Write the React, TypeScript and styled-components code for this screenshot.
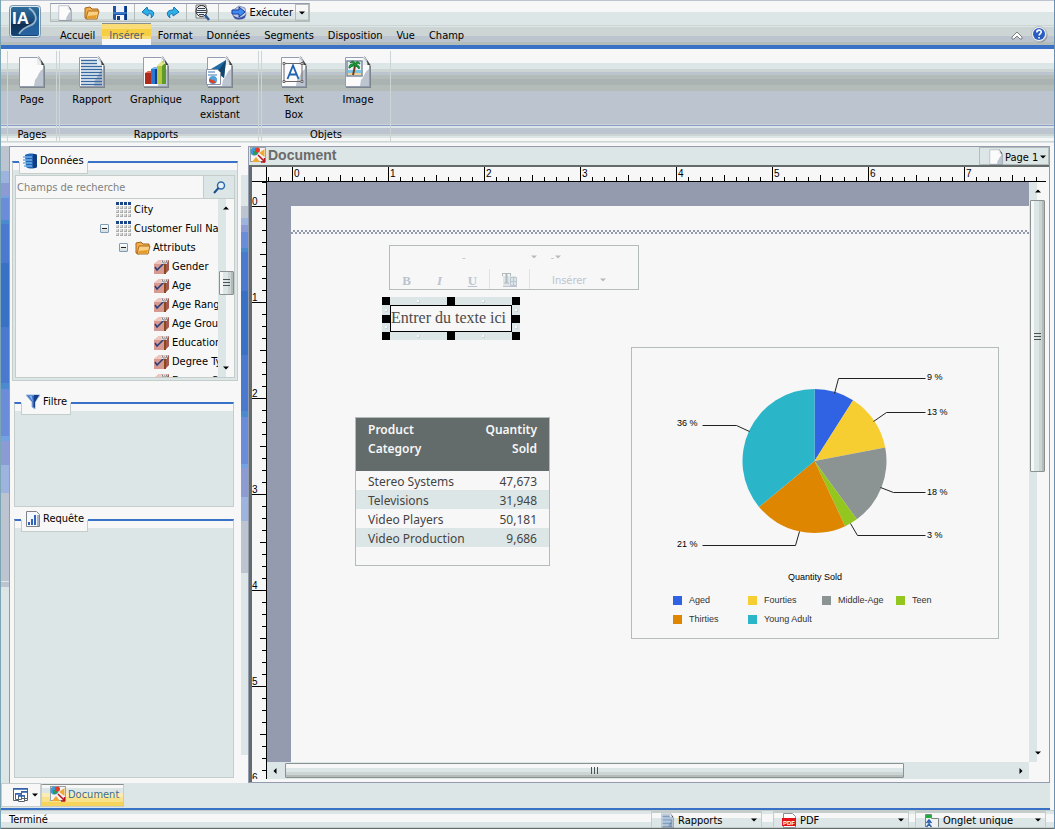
import React from "react";
import styled, { createGlobalStyle, css } from "styled-components";

const c = {
  white: "#f7f7f7",
  pale: "#dde6e6",
  mist: "#ccd5d3",
  steel: "#bcc4cf",
  sage: "#b4bcb9",
  edge: "#c4cdc9",
  frame: "#949bae",
  blue: "#3971c6",
  slate: "#636c6b",
};

const ui = `"DejaVu Sans Condensed", "Noto Sans", sans-serif`;

const Global = createGlobalStyle`
  * { box-sizing: border-box; }
  body { margin: 0; background: ${c.white}; }
  button, input, select { font: inherit; color: inherit; margin: 0; }
  button { border: 0; padding: 0; background: none; }
  svg { flex: none; }
`;

/* ---------- shell ---------- */

const Shell = styled.div`
  display: flex;
  flex-direction: column;
  min-height: 100vh;
  background: ${c.white};
  border-left: 1px solid #7ba5b5;
  border-right: 1px solid #6b8fae;
  color: #000;
  font: 11px/15px ${ui};
`;

const Header = styled.header`
  display: flex;
  height: 49px;
  border-top: 1px solid ${c.steel};
  border-bottom: 4px solid ${c.blue};
  background: linear-gradient(
    ${c.white} 0 11px, ${c.pale} 11px 24px, ${c.mist} 24px 25px, ${c.pale} 25px 26px,
    ${c.mist} 26px 35px, ${c.steel} 35px 41px, ${c.sage} 41px
  );
`;

const LogoButton = styled.button`
  width: 34px;
  height: 36px;
  margin: 3px 8px 0 7px;
`;

const HeaderRows = styled.div`
  flex: 1;
  min-width: 0;
`;

const QuickBar = styled.div`
  display: flex;
  align-items: center;
  width: 260px;
  height: 19px;
  margin-top: 2px;
  border: 1px solid ${c.sage};
  border-top-color: ${c.frame};
  background: linear-gradient(${c.white} 0 8px, ${c.pale} 8px 15px, ${c.mist} 15px);
`;

const QuickGroup = styled.div<{ $w: number }>`
  display: flex;
  align-items: center;
  justify-content: space-around;
  width: ${(p) => p.$w}px;
  height: 17px;
  border-right: 1px solid ${c.sage};
`;

const IconButton = styled.button`
  display: flex;
  align-items: center;
  justify-content: center;
  width: 18px;
  height: 17px;
`;

const RunButton = styled.button`
  display: flex;
  flex: 1;
  align-items: center;
  justify-content: flex-end;
  gap: 2px;
  height: 17px;
  padding-right: 2px;
`;

const RunMenu = styled.button`
  display: flex;
  align-items: center;
  justify-content: center;
  width: 14px;
  height: 17px;
  border: 1px solid ${c.sage};
`;

const MenuRow = styled.nav`
  display: flex;
  height: 22px;
  margin-top: 1px;
  padding-left: 3px;
`;

const MenuTab = styled.button<{ $on?: boolean }>`
  height: 22px;
  padding: 3px 7px 0;
  white-space: nowrap;
  ${(p) =>
    p.$on &&
    css`
      border-top: 1px solid #8a8f8c;
      padding-top: 1px;
      color: #4a5f78;
      background: linear-gradient(#f8dc78 0 5px, #f6ce42 5px 12px, #f8dc78 12px 15px, ${c.white} 15px);
    `}
`;

const HeaderTools = styled.div`
  display: flex;
  align-self: flex-end;
  align-items: center;
  gap: 4px;
  height: 21px;
  padding-right: 6px;
`;

/* ---------- ribbon ---------- */

const Ribbon = styled.section`
  display: flex;
  height: 97px;
  padding: 2px 0 4px 6px;
  background: linear-gradient(
    ${c.white} 0 14px, ${c.pale} 14px 20px, ${c.mist} 20px 23px, ${c.steel} 23px 26px,
    ${c.sage} 26px 30px, #abb3b2 30px 36px, ${c.sage} 36px 42px, ${c.steel} 42px 75px,
    ${c.mist} 75px 76px, #8b9bcf 76px 77px, ${c.pale} 77px 79px, ${c.steel} 79px 85px,
    ${c.mist} 85px 87px, ${c.pale} 87px 89px, ${c.white} 89px 92px, ${c.mist} 92px 93px,
    ${c.pale} 93px 94px, ${c.white} 94px
  );
`;

const RibbonGroup = styled.div<{ $end?: number }>`
  display: flex;
  flex-direction: column;
  padding-right: ${(p) => p.$end || 0}px;
  margin-right: 2px;
  border-left: 1px solid ${c.mist};
  border-right: 1px solid ${c.mist};
`;

const RibbonItems = styled.div`
  display: flex;
  height: 76px;
`;

const RibbonItem = styled.button<{ $narrow?: boolean }>`
  display: flex;
  flex-direction: column;
  align-items: center;
  gap: 4px;
  width: ${(p) => (p.$narrow ? 48 : 64)}px;
  padding: 5px 0 0;
  white-space: pre-line;
`;

const RibbonLabel = styled.div`
  text-align: center;
  line-height: 15px;
`;

/* ---------- work area ---------- */

const Work = styled.main`
  display: flex;
  flex: 1;
  min-height: 600px;
`;

const LeftEdge = styled.div`
  width: 8px;
  background: linear-gradient(
    ${c.steel} 0 25px, #9cb4de 25px 37px, #8c9bd3 37px 50px, #73a2e3 50px 52px, #6a8cd9 52px 74px,
    #4a8bd0 74px 78px, #4a79d0 78px 117px, ${c.blue} 117px 181px, #4a79d0 181px 237px,
    #4a8bd0 237px 243px, #6a8cd9 243px 290px, #73a2e3 290px 295px, #8c9bd3 295px 319px,
    #9cb4de 319px 347px, ${c.steel} 347px 435px, ${c.pale} 435px 436px, ${c.steel} 436px 441px, ${c.pale} 441px
  );
`;

const Splitter = styled.div`
  width: 7px;
  margin: 29px 0 28px;
  background: linear-gradient(
    ${c.pale} 0 31px, ${c.steel} 31px 43px, #9cb4de 43px 50px, #8c9bd3 50px 57px, #6a8cd9 57px 73px,
    #4a8bd0 73px 77px, #4a79d0 77px 116px, ${c.blue} 116px 180px, #4a79d0 180px 236px,
    #4a8bd0 236px 242px, #6a8cd9 242px 289px, #73a2e3 289px 293px, #8c9bd3 293px 322px,
    #9cb4de 322px 346px, ${c.steel} 346px 398px, ${c.pale} 398px
  );
`;

const SidePanel = styled.aside`
  display: flex;
  flex-direction: column;
  width: 232px;
  padding: 14px 3px 5px 2px;
  border-top: 1px solid ${c.frame};
  border-left: 1px solid ${c.frame};
`;

const Group = styled.section<{ $h?: number; $inset?: boolean; $gap?: number }>`
  display: flex;
  flex-direction: column;
  ${(p) => (p.$h ? `height: ${p.$h}px;` : "flex: 1;")}
  margin: ${(p) => p.$gap || 0}px ${(p) => (p.$inset ? "4px 0 2px" : "0 0 0")};
  padding: 0 2px 2px;
  border: 1px solid ${c.edge};
  border-top: 2px solid ${c.blue};
  background: linear-gradient(${c.white} 0 7px, ${c.pale} 7px);
`;

const GroupTitle = styled.h2`
  display: flex;
  align-items: center;
  gap: 2px;
  align-self: flex-start;
  height: 24px;
  margin: -13px 0 0 4px;
  padding: 0 4px 3px 4px;
  font: inherit;
  background:
    linear-gradient(${c.edge}, ${c.edge}) 0 100% / 1px 12px no-repeat,
    linear-gradient(${c.edge}, ${c.edge}) 100% 100% / 1px 12px no-repeat,
    linear-gradient(${c.edge}, ${c.edge}) 0 100% / 100% 1px no-repeat,
    ${c.white};
`;

const SearchRow = styled.form`
  display: flex;
  height: 24px;
  margin-top: 1px;
  border: 1px solid ${c.edge};
  background: ${c.white};
`;

const SearchInput = styled.input`
  flex: 1;
  min-width: 0;
  padding: 0 1px;
  border: 0;
  outline: 0;
  background: transparent;
  &::placeholder { color: #7d827f; opacity: 1; }
`;

const SearchButton = styled.button`
  display: flex;
  align-items: center;
  justify-content: center;
  width: 31px;
  border-left: 1px solid ${c.edge};
  background: ${c.pale};
`;

const TreeBox = styled.div`
  display: flex;
  flex: 1;
  min-height: 0;
  border: 1px solid ${c.edge};
  border-top: 0;
  background: ${c.white};
`;

const Tree = styled.ul`
  flex: 1;
  min-width: 0;
  margin: 0;
  padding: 1px 0 0;
  overflow: hidden;
  list-style: none;
`;

const Leaf = styled.li<{ $depth: number }>`
  display: flex;
  align-items: center;
  gap: 2px;
  height: 19px;
  padding-left: ${(p) => 62 + p.$depth * 19}px;
  white-space: nowrap;
`;

const Toggle = styled.button`
  flex: none;
  width: 9px;
  height: 9px;
  margin: 0 5px 0 3px;
  border: 1px solid #7f9bb5;
  border-radius: 1px;
  background: linear-gradient(#222, #222) center / 5px 1px no-repeat, linear-gradient(#fff, #d4dcdc);
`;

const NoToggle = styled.span`
  flex: none;
  width: 17px;
`;

const VBar = styled.div<{ $w: number }>`
  display: flex;
  flex: none;
  flex-direction: column;
  align-items: center;
  width: ${(p) => p.$w}px;
  background: linear-gradient(90deg, ${c.pale} 0 50%, ${c.white} 50%);
`;

const BarCorner = styled.div`
  width: 100%;
  height: 17px;
  background: ${c.white};
`;

const HBar = styled.div`
  display: flex;
  align-items: center;
  width: 100%;
  height: 17px;
  background: ${c.pale};
`;

const ArrowButton = styled.button`
  display: flex;
  flex: none;
  align-items: center;
  justify-content: center;
  width: 16px;
  height: 18px;
`;

const Thumb = styled.div<{ $dir: "v" | "h"; $size: number }>`
  display: flex;
  align-items: center;
  justify-content: center;
  border: 1px solid #8b9190;
  border-radius: 1px;
  ${(p) =>
    p.$dir === "v"
      ? css`
          width: 15px;
          height: ${p.$size}%;
          background: linear-gradient(90deg, ${c.white} 0 3px, ${c.pale} 3px 8px, ${c.mist} 8px 11px, ${c.sage} 11px);
        `
      : css`
          width: ${p.$size}%;
          height: 15px;
          background: linear-gradient(${c.white} 0 4px, ${c.pale} 4px 8px, ${c.mist} 8px 11px, ${c.sage} 11px);
        `}
`;

const Track = styled.div<{ $dir: "v" | "h"; $lead: number }>`
  display: flex;
  flex: 1;
  flex-direction: ${(p) => (p.$dir === "v" ? "column" : "row")};
  align-items: center;
  min-height: 0;
  ${(p) => (p.$dir === "v" ? `padding-top: ${p.$lead}px;` : `padding-left: ${p.$lead}px;`)}
`;

/* ---------- document ---------- */

const DocPanel = styled.section`
  display: flex;
  flex: 1;
  flex-direction: column;
  min-width: 0;
  margin-right: 4px;
  border: 1px solid ${c.frame};
`;

const DocBar = styled.div`
  display: flex;
  justify-content: space-between;
  height: 18px;
  background: ${c.pale};
`;

const DocTitle = styled.h1`
  display: flex;
  align-items: center;
  gap: 2px;
  margin: 0;
  padding: 0 0 2px 1px;
  color: #6b6b6b;
  font: bold 14px/16px "Liberation Sans", Arial, sans-serif;
`;

const PageButton = styled.button`
  display: flex;
  align-items: center;
  gap: 2px;
  width: 70px;
  padding: 2px 3px 0 9px;
  border: 1px solid ${c.sage};
  white-space: nowrap;
`;

const DocBody = styled.div`
  display: flex;
  flex: 1;
  flex-direction: column;
  min-height: 0;
  padding: 0 3px 3px 0;
  border-top: 2px solid ${c.slate};
  border-left: 3px solid ${c.slate};
`;

const RulerRow = styled.div`
  display: flex;
  height: 15px;
  overflow: hidden;
  border-bottom: 1px solid #000;
`;

const BodyRow = styled.div`
  display: flex;
  flex: 1;
  min-height: 0;
`;

const SideRuler = styled.div`
  position: relative;
  flex: none;
  width: 15px;
  overflow: hidden;
  border-right: 1px solid #000;
  svg { position: absolute; top: 0; left: 0; }
`;

const Corner = styled.div`
  flex: none;
  width: 15px;
  border-right: 1px solid #000;
`;

const CanvasColumn = styled.div`
  display: flex;
  flex: 1;
  flex-direction: column;
  min-width: 0;
`;

const Canvas = styled.div`
  display: flex;
  flex: 1;
  min-height: 0;
  padding: 24px 0 0 24px;
  overflow: hidden;
  background: ${c.frame};
`;

const Page = styled.div`
  position: relative;
  flex: 1;
  background: ${c.white};
`;

const HeaderMark = styled.div`
  height: 4px;
  margin-top: 24px;
  background: repeating-conic-gradient(${c.frame} 0 25%, ${c.white} 0 50%) 0 0 / 4px 4px;
`;

const TextTools = styled.div`
  position: absolute;
  left: 98px;
  top: 39px;
  display: grid;
  grid-template-rows: 22px 21px;
  width: 250px;
  border: 1px solid ${c.sage};
  color: ${c.steel};
`;

const ToolRow = styled.div`
  display: flex;
  align-items: center;
`;

const StyleButton = styled.button<{ $look: string }>`
  width: 33px;
  padding-top: 4px;
  text-align: center;
  font: bold 13px/15px "Liberation Serif", serif;
  ${(p) => p.$look}
`;

const ToolCell = styled.button`
  display: flex;
  align-items: center;
  justify-content: center;
  gap: 14px;
  height: 20px;
  padding: 3px 11px 0;
  border-left: 1px solid ${c.pale};
`;

const InsertCell = styled(ToolCell)`
  padding: 3px 22px 0;
`;

const PickRow = styled(ToolRow)`
  gap: 14px;
  padding-left: 72px;
`;

const Pick = styled.button<{ $gap: number }>`
  display: flex;
  align-items: center;
  gap: ${(p) => p.$gap}px;
`;

const Selection = styled.div`
  position: absolute;
  left: 91px;
  top: 91px;
  padding: 8px;
  background: ${c.pale};
`;

const TextBox = styled.div`
  width: 122px;
  height: 27px;
  border: 1px solid #000;
  background: ${c.white};
  color: #4a4a4a;
  white-space: nowrap;
  font: 16px/23px "Liberation Serif", "Times New Roman", serif;
`;

const Handle = styled.i<{ $x: string; $y: string; $dot?: boolean }>`
  position: absolute;
  left: ${(p) => p.$x};
  top: ${(p) => p.$y};
  width: ${(p) => (p.$dot ? 3 : 8)}px;
  height: ${(p) => (p.$dot ? 3 : 8)}px;
  background: ${(p) => (p.$dot ? c.white : "#000")};
  border: solid ${c.mist};
  border-width: ${(p) => (p.$dot ? "0 1px 1px 0" : "0")};
`;

const Report = styled.div`
  position: absolute;
  left: 64px;
  top: 211px;
  width: 195px;
  height: 149px;
  border: 1px solid ${c.sage};
`;

const Sales = styled.table`
  width: 100%;
  border-collapse: collapse;
  color: #444;
  font: 12px/19px "Noto Sans", sans-serif;
  th {
    height: 53px;
    padding: 2px 12px 0;
    vertical-align: top;
    color: ${c.white};
    background: ${c.slate};
    font-weight: 600;
    text-align: left;
  }
  td {
    height: 19px;
    padding: 2px 12px 0;
    line-height: 17px;
  }
  th:last-child, td:last-child {
    padding-left: 0;
    text-align: right;
  }
  td:first-child { white-space: nowrap; }
  tbody tr:nth-child(even) { background: ${c.pale}; }
`;

const Chart = styled.figure`
  position: absolute;
  left: 340px;
  top: 141px;
  width: 368px;
  height: 292px;
  margin: 0;
  border: 1px solid ${c.sage};
  color: #333;
  font: 9px/13px "Liberation Sans", Arial, sans-serif;
  svg { display: block; }
`;

const ChartTitle = styled.figcaption`
  color: #000;
  text-align: center;
`;

const Legend = styled.ul`
  display: grid;
  grid-template-columns: 75px 74px 74px 74px;
  row-gap: 6px;
  margin: 10px 0 0 41px;
  padding: 0;
  list-style: none;
  li { display: flex; align-items: center; gap: 7px; white-space: nowrap; }
`;

const Swatch = styled.span<{ $color: string }>`
  width: 9px;
  height: 9px;
  background: ${(p) => p.$color};
`;

/* ---------- bottom ---------- */

const TabStrip = styled.div`
  display: flex;
  height: 27px;
  margin-right: 4px;
  padding-bottom: 1px;
  border-bottom: 2px solid ${c.blue};
  background: ${c.pale};
`;

const WindowButton = styled.button`
  display: flex;
  align-items: center;
  justify-content: flex-end;
  gap: 3px;
  width: 40px;
  padding-right: 2px;
  border: 1px solid ${c.edge};
  background: ${c.white};
`;

const DocTab = styled.button`
  display: flex;
  align-items: center;
  gap: 2px;
  margin-top: 1px;
  padding: 0 4px 3px 8px;
  border: 1px solid ${c.edge};
  border-top-color: #8a8f8c;
  color: #3f6a92;
  background: linear-gradient(
    ${c.white} 0 3px, ${c.pale} 3px 8px, #f9edb5 8px 12px, #f8e28c 12px 17px, #f6d35a 17px
  );
`;

const StatusBar = styled.footer`
  display: flex;
  align-items: center;
  justify-content: space-between;
  height: 19px;
  padding-left: 8px;
  border-top: 1px solid ${c.edge};
  border-bottom: 1px solid ${c.slate};
  background: linear-gradient(${c.pale} 0 3px, ${c.white} 3px 11px, ${c.pale} 11px 16px, ${c.edge} 16px);
`;

const StatusPickers = styled.div`
  display: flex;
  height: 17px;
`;

const StatusPick = styled.label<{ $w: number; $end: number }>`
  display: flex;
  align-items: center;
  gap: 3px;
  width: ${(p) => p.$w}px;
  height: 17px;
  margin-right: ${(p) => p.$end}px;
  padding: 0 4px 0 8px;
  border: 1px solid ${c.edge};
  border-top-width: 2px;
  background: linear-gradient(${c.white} 0 5px, ${c.pale} 5px);
`;

const PlainSelect = styled.select`
  flex: 1;
  min-width: 0;
  height: 15px;
  padding: 0;
  border: 0;
  outline: 0;
  appearance: none;
  background: transparent;
`;

/* ---------- icons ---------- */

const Caret = ({ dir = "down", fill = "#000", size = 5 }: { dir?: string; fill?: string; size?: number }) => {
  const turn: Record<string, number> = { down: 0, up: 180, left: 90, right: 270 };
  return (
    <svg width={size + 1} height={size + 1} viewBox="0 0 6 6" aria-hidden="true">
      <path d="M0 1.500h6L3 4.500z" fill={fill} transform={`rotate(${turn[dir]} 3 3)`} />
    </svg>
  );
};

const Sheet = ({ children, w = 28, h = 32 }: { children?: React.ReactNode; w?: number; h?: number }) => (
  <svg width={w} height={h} viewBox="0 0 28 32" aria-hidden="true">
    <path d="M2 2h18l7 8v22H2z" fill="#7c858c" />
    <path d="M1.500 1.500h18l6 8v21h-24z" fill="#fbfbfc" stroke="#949cb0" />
    <path d="M25 13c-5 3-4 7-8 11l-1 6h9z" fill="#bcc4d0" />
    <path d="M19 1v8h6z" fill="#e8ecec" />
    <path d="M20.500 0l6 9h-3c0-4-1-6-3-8z" fill="#3c4246" />
    {children}
  </svg>
);

const Lines = () => (
  <path
    d="M3 4.500h16M3 7.500h16M3 10.500h21M3 13.500h21M3 16.500h21M3 19.500h21M3 22.500h21M3 25.500h21M3 28.500h21"
    stroke="#35699f"
    strokeWidth="1.400"
  />
);

const Bars = () => (
  <g>
    <path d="M3 17l7-1v12H3z" fill="#b02a1c" />
    <path d="M3 17l3-2h5l-1 2z" fill="#e06a52" />
    <path d="M9 13l6-1v16H9z" fill="#2a78d0" />
    <path d="M9 13l3-2h4l-1 2z" fill="#7ab4ee" />
    <path d="M13 13h2v15h-2z" fill="#163c94" />
    <path d="M15 10l7-6v24h-7z" fill="#b4c83e" />
    <path d="M20 9l4-2v21h-4z" fill="#5c9a2a" />
    <path d="M15 10l4-4 4 1-3 3z" fill="#e4e68a" />
  </g>
);

const Existing = () => (
  <g>
    <path d="M5 13L20 4l-2 18z" fill="#1f6da4" />
    <path d="M20 4l-8 11 6 7z" fill="#14456e" />
    <path d="M0.500 13.500h11l3 3v12h-14z" fill="#fff" stroke="#8a94a4" />
    <path d="M2 16h7M2 19h9" stroke="#3b78b8" />
    <circle cx="7" cy="24" r="4" fill="#54a0d8" />
    <path d="M7 24l-4-1a4 4 0 0 0 7 3z" fill="#d8432c" />
  </g>
);

const Letter = () => (
  <g fill="none">
    <path d="M4 7.500h18v18H4z" stroke="#6f6668" />
    <path d="M7.500 23L13 9.500 18.500 23M9.500 18.500h7" stroke="#1f62b0" strokeWidth="1.800" />
    <path d="M3 6.500h2v2H3zM21 6.500h2v2h-2zM3 24.500h2v2H3zM21 24.500h2v2h-2z" fill="#fff" stroke="#6f6668" />
  </g>
);

const Palm = () => (
  <g>
    <path d="M3 5h15v15H3z" fill="#e6eef4" stroke="#7c8ba0" strokeWidth="1.500" />
    <path d="M4 14h13v3H4z" fill="#7ac4e6" />
    <path d="M4 17h13v2H4z" fill="#ecd294" />
    <path d="M11 10l-2 9" stroke="#7a3a1a" strokeWidth="2" />
    <path d="M5 12c0-4 3-5 5-3-1-3-3-3-4-2 2-3 5-2 5 1 1-3 4-3 5 0-2-1-3 0-4 1 3 0 4 2 3 4-1-2-3-3-4-3-2 0-4 0-5 2z" fill="#1c9a3c" stroke="#117a2c" />
  </g>
);

const Folder = ({ s = 16 }: { s?: number }) => (
  <svg width={s} height={s} viewBox="0 0 16 16" aria-hidden="true">
    <path d="M1 3l5-1 2 2h6v3L4 14 1 13z" fill="#f0ac48" stroke="#a8641c" />
    <path d="M4 6h11l-2 8H2z" fill="#f9cf82" stroke="#b06e1e" />
    <path d="M4 11l9-1-1 3H3z" fill="#e89c28" />
  </svg>
);

const Disk = () => (
  <svg width="16" height="16" viewBox="0 0 16 16" aria-hidden="true">
    <path d="M1 1h14v14H2l-1-1z" fill="#1f55a8" />
    <path d="M4 1h8v6H4z" fill="#eef3fb" />
    <path d="M13 1h2v14h-2z" fill="#0f3578" />
    <path d="M1 8h14" stroke="#58a0e4" />
    <path d="M4 10h8v5H4z" fill="#f4f6f8" />
    <path d="M5 11h3v4H5z" fill="#163a78" />
  </svg>
);

const Bend = ({ flip }: { flip?: boolean }) => (
  <svg width="14" height="14" viewBox="0 0 14 14" aria-hidden="true">
    <path
      d="M6 1L1 6l6 4V8c3-1 4 1 3 4 4-3 4-8-3-8z"
      fill="#2cb0e6"
      stroke="#1673b4"
      transform={flip ? "translate(14 0) scale(-1 1)" : undefined}
    />
  </svg>
);

const Preview = () => (
  <svg width="17" height="17" viewBox="0 0 17 17" aria-hidden="true">
    <path d="M2 1h10v13H2z" fill="#f4f4f4" stroke="#777" />
    <circle cx="7.500" cy="7" r="5.500" fill="#eef2f8" stroke="#222" />
    <path d="M4 4.500h7M3 6.500h9M3 8.500h9M5 10.500h5" stroke="#35424f" />
    <path d="M11 11l4 5" stroke="#2c5a96" strokeWidth="2.500" />
  </svg>
);

const RunIcon = () => (
  <svg width="16" height="15" viewBox="0 0 16 15" aria-hidden="true">
    <path d="M1 6l7-5 6 2 1 7-7 4-6-3z" fill="#c4cde0" stroke="#8a96b8" />
    <path d="M2 10c4 4 10 3 13-1l-1 4c-4 2-8 2-11 0z" fill="#3b55a8" />
    <path d="M1 5h7V2l6 5-6 5V9H1z" fill="#3f8cf0" stroke="#1a3ca0" />
  </svg>
);

const Logo = () => (
  <svg width="34" height="36" viewBox="0 0 34 36" aria-hidden="true">
    <defs>
      <linearGradient id="logo" x1="0" y1="0" x2="0" y2="1">
        <stop offset="0" stopColor="#2f6d9c" />
        <stop offset="0.500" stopColor="#174a78" />
        <stop offset="0.600" stopColor="#0e2f52" />
        <stop offset="1" stopColor="#16457a" />
      </linearGradient>
    </defs>
    <rect x="1.500" y="1.500" width="31" height="32" rx="3" fill="#dbe8ee" stroke="#7e98ac" />
    <rect x="3" y="3" width="28" height="29" rx="2" fill="url(#logo)" />
    <path d="M12 31c3-6 9-7 13-11 3-3 4-7 6-10v21z" fill="#2a6cab" opacity="0.800" />
    <path d="M21 4c6 4 9 10 5 15-4 4-10 3-15 11" fill="none" stroke="#b4cfe2" strokeWidth="1.800" opacity="0.800" />
    <text x="4" y="20" fill="#fff" fontFamily="Liberation Sans" fontWeight="bold" fontSize="17">IA</text>
  </svg>
);

const DataIcon = () => (
  <svg width="15" height="16" viewBox="0 0 15 16" aria-hidden="true">
    <path d="M2 2c3-2 9-2 12 0v12c-3 2-8 2-11 0z" fill="#2464b4" />
    <path d="M10 1c2 0 3 0 4 1v12c-1 1-2 1-4 1z" fill="#123c80" />
    <path d="M0 4h9M0 7h9M0 10h9M1 13h8" stroke="#6db0e8" strokeWidth="1.500" />
  </svg>
);

const Funnel = () => (
  <svg width="16" height="16" viewBox="0 0 16 16" aria-hidden="true">
    <path d="M1 1h14l-5 7v7l-3-2V8z" fill="#2e66c4" stroke="#9db6d8" />
    <path d="M9 1h5l-4 7v6l-1-1z" fill="#173c86" />
    <path d="M4 2h3l1 6z" fill="#7cb2ee" />
  </svg>
);

const QueryIcon = () => (
  <svg width="16" height="16" viewBox="0 0 16 16" aria-hidden="true">
    <path d="M1.500 0.500h10l3 3v12h-13z" fill="#f4f7fb" stroke="#7d8489" />
    <path d="M3 11h2v3H3zM6 8h2v6H6zM9 4h2v10H9z" fill="#2f62b8" />
    <path d="M12 4h2v11h-2z" fill="#a8b4c4" />
  </svg>
);

const GridIcon = () => (
  <svg width="16" height="16" viewBox="0 0 16 16" aria-hidden="true">
    {[0, 1, 2, 3].map((y) =>
      [0, 1, 2, 3].map((x) => (
        <rect key={`${x}${y}`} x={x * 4} y={y * 4} width="3" height="3" fill={y ? "#a9adb0" : "#1c4488"} />
      ))
    )}
    {[1, 2, 3].map((y) =>
      [0, 1, 2, 3].map((x) => <rect key={`${x}${y}`} x={x * 4} y={y * 4} width="2" height="2" fill="#d8d6cc" />)
    )}
  </svg>
);

const AttributeIcon = () => (
  <svg width="16" height="16" viewBox="0 0 16 16" aria-hidden="true">
    <path d="M0 5l5-4h10v10l-4 4H0z" fill="#d69a92" />
    <path d="M0 5l5-4h10l-4 4z" fill="#efc6be" />
    <path d="M11 5l4-4v10l-4 4z" fill="#a45a50" />
    <path d="M1 8l2 3 8-8" fill="none" stroke="#2a3c78" strokeWidth="1.500" />
    <path d="M8 1l1 3h3l1-3" fill="none" stroke="#f4f4f4" strokeWidth="2" />
    <path d="M8 1l1 3h3l1-3" fill="none" stroke="#555" strokeWidth="0.700" />
    <path d="M11 5v10" stroke="#8a4a18" strokeWidth="2" />
  </svg>
);

const SearchIcon = () => (
  <svg width="13" height="13" viewBox="0 0 13 13" aria-hidden="true">
    <circle cx="8" cy="4.500" r="3.500" fill="#e8f2fa" stroke="#2f6cae" strokeWidth="1.500" />
    <path d="M5.500 7L1 12" stroke="#1d4f8c" strokeWidth="2" />
  </svg>
);

const DocIcon = () => (
  <svg width="16" height="16" viewBox="0 0 16 16" aria-hidden="true">
    <rect x="0.500" y="0.500" width="15" height="14" fill="#f4f4f4" stroke="#9aa2a8" />
    <circle cx="4.500" cy="4.500" r="4" fill="#3a9ad8" />
    <path d="M3 4h5a4 4 0 0 1-5 4z" fill="#2f9a58" />
    <circle cx="7.500" cy="3" r="2.500" fill="#e23a24" />
    <path d="M14.500 2v8L9 6z" fill="#f0a830" />
    <path d="M2 15l4-5 4 5z" fill="#f0a830" />
    <path d="M8 8l6 6M14.500 11v4H11" fill="none" stroke="#b8141c" strokeWidth="1.500" />
  </svg>
);

const WindowsIcon = () => (
  <svg width="17" height="16" viewBox="0 0 17 16" aria-hidden="true">
    <path d="M1.500 1.500h14v12h-14z" fill="#fff" stroke="#56616c" />
    <path d="M3.500 6.500h6v6h-6zM9.500 4.500h6v7h-6zM6.500 8.500h6v6h-6z" fill="#fff" stroke="#56616c" />
    <path d="M1 2h15M9 5h7M3 7h6M6 9h7" stroke="#2f62b0" strokeWidth="1.500" />
  </svg>
);

const PdfIcon = () => (
  <svg width="15" height="15" viewBox="0 0 15 15" aria-hidden="true">
    <path d="M1.500 0.500h9l3 3v11h-12z" fill="#fff" stroke="#8a9096" />
    <path d="M0 5h14v8H0z" fill="#e4121a" />
    <text x="1" y="12" fill="#fff" fontFamily="Liberation Sans" fontWeight="bold" fontSize="6">PDF</text>
  </svg>
);

const TabIcon = () => (
  <svg width="16" height="15" viewBox="0 0 16 15" aria-hidden="true">
    <path d="M1.500 14V1.500h6v4h7V14" fill="#eef2f2" stroke="#7c8486" />
    <path d="M2 2h5v3H2z" fill="#1fae3c" />
    <path d="M5 7v4M2.500 10L5 7l2.500 3M2.500 14L5 11l2.500 3" fill="none" stroke="#2f62b0" strokeWidth="1.500" />
  </svg>
);

const TextStyleIcon = () => (
  <svg width="17" height="16" viewBox="0 0 17 16" aria-hidden="true">
    <path d="M2 4h13v11H2z" fill={c.pale} />
    <path d="M9.500 5.500h6v8h-6zM9 9.500h7M12.500 5v9M2 14.500h14" fill="none" stroke={c.steel} />
    <path d="M1 1.500h9M1.500 1v3M9.500 1v3M3 11h5" fill="none" stroke="#b0b9bb" />
    <path d="M5.500 1v10" stroke="#b0b9bb" strokeWidth="2" />
  </svg>
);

const HelpIcon = () => (
  <svg width="17" height="17" viewBox="0 0 17 17" aria-hidden="true">
    <circle cx="9" cy="9" r="7.500" fill="#8a9096" />
    <circle cx="8" cy="8" r="7.500" fill="#eef1f4" stroke="#b8bec6" />
    <circle cx="8" cy="8" r="6" fill="#2a5cc0" />
    <path d="M5.800 6.500c0-3.200 4.600-3 4.500-.4 0 1.500-2.200 1.600-2.200 3.400M8.100 11v1.600" fill="none" stroke="#fff" strokeWidth="1.600" />
  </svg>
);

const Collapse = () => (
  <svg width="12" height="10" viewBox="0 0 12 10" aria-hidden="true">
    <path d="M1 7l5-5 5 5v2H9L6 6 3 9H1z" fill="#fff" stroke="#7a8080" />
  </svg>
);

const Grip = ({ dir }: { dir: "v" | "h" }) => (
  <svg width="9" height="9" viewBox="0 0 9 9" aria-hidden="true">
    <path d={dir === "v" ? "M1 1.500h7M1 4.500h7M1 7.500h7" : "M1.500 1v7M4.500 1v7M7.500 1v7"} stroke="#4c5252" />
  </svg>
);

/* ---------- rulers ---------- */

const INCH = 96;
const STEP = 12;
const ticks = Array.from({ length: 240 }, (_, i) => i - 2);
const tickSize = (i: number) => (i % 8 === 0 ? 15 : i % 4 === 0 ? 6 : 4);
const topInches = [0, 1, 2, 3, 4, 5, 6, 7];
const sideInches = [0, 1, 2, 3, 4, 5, 6];

const TopScale = () => (
  <svg width="2400" height="14" viewBox="0 0 2400 14" aria-hidden="true">
    {ticks.map((i) => (
      <rect key={i} x={25 + i * STEP} y={14 - tickSize(i)} width="1" height={tickSize(i)} fill="#000" />
    ))}
    {topInches.map((n) => (
      <text key={n} x={27 + n * INCH} y="10" fontSize="10" fontFamily="Liberation Sans">{n}</text>
    ))}
  </svg>
);

const SideScale = () => (
  <svg width="14" height="2400" viewBox="0 0 14 2400" aria-hidden="true">
    {ticks.map((i) => (
      <rect key={i} y={24 + i * STEP} x={14 - tickSize(i)} height="1" width={tickSize(i)} fill="#000" />
    ))}
    {sideInches.map((n) => (
      <text key={n} x="0" y={23 + n * INCH} fontSize="10" fontFamily="Liberation Sans">{n}</text>
    ))}
  </svg>
);

/* ---------- data ---------- */

const menus = ["Accueil", "Insérer", "Format", "Données", "Segments", "Disposition", "Vue", "Champ"];

const attributes = ["Gender", "Age", "Age Range", "Age Group", "Education", "Degree Type", "Degree Owned"];

const sales = [
  ["Stereo Systems", "47,673"],
  ["Televisions", "31,948"],
  ["Video Players", "50,181"],
  ["Video Production", "9,686"],
];

const slices = [
  { name: "Aged", value: 9, color: "#3063e4", line: "M202 45L206 30H293", x: 295, y: 32 },
  { name: "Fourties", value: 13, color: "#f6ce31", line: "M241 73L254 64H293", x: 295, y: 67 },
  { name: "Middle-Age", value: 18, color: "#8b9493", line: "M248 139L261 144H293", x: 295, y: 147 },
  { name: "Teen", value: 3, color: "#94c620", line: "M218 175L225 187H293", x: 295, y: 190 },
  { name: "Thirties", value: 21, color: "#de8600", line: "M167 183L163 197H70", x: 45, y: 199 },
  { name: "Young Adult", value: 36, color: "#2ab5c8", line: "M117 83L104 77H70", x: 45, y: 78 },
];

const Pie = () => {
  const cx = 182.5;
  const cy = 113;
  const r = 72;
  let total = 0;
  const point = (v: number) => {
    const a = (v / 100) * Math.PI * 2;
    return `${cx + r * Math.sin(a)} ${cy - r * Math.cos(a)}`;
  };
  return (
    <svg width="366" height="223" viewBox="0 0 366 223" role="img" aria-label="Quantity Sold">
      {slices.map((s) => {
        const from = total;
        total += s.value;
        return <path key={s.name} d={`M${cx} ${cy}L${point(from)}A${r} ${r} 0 0 1 ${point(total)}z`} fill={s.color} />;
      })}
      {slices.map((s) => (
        <g key={s.name}>
          <path d={s.line} fill="none" stroke="#222" transform="translate(0.500 0.500)" />
          <text x={s.x} y={s.y} fill="#000" fontSize="9">{s.value} %</text>
        </g>
      ))}
    </svg>
  );
};

const handles = [
  ["0", "0"], ["65px", "0"], ["130px", "0"],
  ["0", "18px"], ["130px", "18px"],
  ["0", "35px"], ["65px", "35px"], ["130px", "35px"],
];

const dots = [
  ["35px", "3px"], ["100px", "3px"], ["35px", "38px"], ["100px", "38px"],
  ["3px", "12px"], ["3px", "29px"], ["133px", "12px"], ["133px", "29px"],
];

export default function App() {
  return (
    <Shell>
      <Global />
      <Header>
        <LogoButton aria-label="InfoAssist"><Logo /></LogoButton>
        <HeaderRows>
          <QuickBar>
            <QuickGroup $w={84}>
              <IconButton aria-label="Nouveau"><Sheet w={14} h={16} /></IconButton>
              <IconButton aria-label="Ouvrir"><Folder /></IconButton>
              <IconButton aria-label="Enregistrer"><Disk /></IconButton>
            </QuickGroup>
            <QuickGroup $w={52}>
              <IconButton aria-label="Annuler"><Bend /></IconButton>
              <IconButton aria-label="Rétablir"><Bend flip /></IconButton>
            </QuickGroup>
            <QuickGroup $w={32}>
              <IconButton aria-label="Aperçu"><Preview /></IconButton>
            </QuickGroup>
            <RunButton><RunIcon />Exécuter</RunButton>
            <RunMenu aria-label="Options d'exécution"><Caret /></RunMenu>
          </QuickBar>
          <MenuRow>
            {menus.map((m) => <MenuTab key={m} $on={m === "Insérer"}>{m}</MenuTab>)}
          </MenuRow>
        </HeaderRows>
        <HeaderTools>
          <IconButton aria-label="Réduire le ruban"><Collapse /></IconButton>
          <IconButton aria-label="Aide"><HelpIcon /></IconButton>
        </HeaderTools>
      </Header>

      <Ribbon>
        <RibbonGroup>
          <RibbonItems>
            <RibbonItem $narrow><Sheet />Page</RibbonItem>
          </RibbonItems>
          <RibbonLabel>Pages</RibbonLabel>
        </RibbonGroup>
        <RibbonGroup $end={6}>
          <RibbonItems>
            <RibbonItem><Sheet><Lines /></Sheet>Rapport</RibbonItem>
            <RibbonItem><Sheet><Bars /></Sheet>Graphique</RibbonItem>
            <RibbonItem><Sheet><Existing /></Sheet>{"Rapport\nexistant"}</RibbonItem>
          </RibbonItems>
          <RibbonLabel>Rapports</RibbonLabel>
        </RibbonGroup>
        <RibbonGroup>
          <RibbonItems>
            <RibbonItem><Sheet><Letter /></Sheet>{"Text\nBox"}</RibbonItem>
            <RibbonItem><Sheet><Palm /></Sheet>Image</RibbonItem>
          </RibbonItems>
          <RibbonLabel>Objets</RibbonLabel>
        </RibbonGroup>
      </Ribbon>

      <Work>
        <LeftEdge />
        <SidePanel>
          <Group $h={220}>
            <GroupTitle><DataIcon />Données</GroupTitle>
            <SearchRow onSubmit={(e) => e.preventDefault()}>
              <SearchInput aria-label="Champs de recherche" placeholder="Champs de recherche" />
              <SearchButton aria-label="Rechercher"><SearchIcon /></SearchButton>
            </SearchRow>
            <TreeBox>
              <Tree>
                <Leaf $depth={1}><NoToggle /><GridIcon />City</Leaf>
                <Leaf $depth={1}><Toggle aria-label="Réduire Customer Full Name" /><GridIcon />Customer Full Name</Leaf>
                <Leaf $depth={2}><Toggle aria-label="Réduire Attributs" /><Folder />Attributs</Leaf>
                {attributes.map((a) => (
                  <Leaf key={a} $depth={3}><NoToggle /><AttributeIcon />{a}</Leaf>
                ))}
              </Tree>
              <VBar $w={16}>
                <ArrowButton aria-label="Monter"><Caret dir="up" /></ArrowButton>
                <Track $dir="v" $lead={54}>
                  <Thumb $dir="v" $size={27}><Grip dir="v" /></Thumb>
                </Track>
                <ArrowButton aria-label="Descendre"><Caret /></ArrowButton>
              </VBar>
            </TreeBox>
          </Group>
          <Group $h={105} $inset $gap={21}>
            <GroupTitle><Funnel />Filtre</GroupTitle>
          </Group>
          <Group $inset $gap={12}>
            <GroupTitle><QueryIcon />Requête</GroupTitle>
          </Group>
        </SidePanel>
        <Splitter />

        <DocPanel>
          <DocBar>
            <DocTitle><DocIcon />Document</DocTitle>
            <PageButton><Sheet w={14} h={16} />Page 1<Caret /></PageButton>
          </DocBar>
          <DocBody>
            <RulerRow>
              <Corner />
              <TopScale />
            </RulerRow>
            <BodyRow>
              <SideRuler><SideScale /></SideRuler>
              <CanvasColumn>
                <Canvas>
                  <Page>
                    <HeaderMark />
                    <TextTools>
                      <PickRow>
                        <Pick $gap={65} aria-label="Police">-<Caret fill={c.sage} /></Pick>
                        <Pick $gap={1} aria-label="Taille">-<Caret fill={c.sage} /></Pick>
                      </PickRow>
                      <ToolRow>
                        <StyleButton $look="">B</StyleButton>
                        <StyleButton $look="font-style: italic;">I</StyleButton>
                        <StyleButton $look="text-decoration: underline;">U</StyleButton>
                        <ToolCell aria-label="Style de texte"><TextStyleIcon /></ToolCell>
                        <InsertCell>Insérer<Caret fill={c.sage} /></InsertCell>
                      </ToolRow>
                    </TextTools>
                    <Selection>
                      <TextBox>Entrer du texte ici</TextBox>
                      {handles.map(([x, y]) => <Handle key={x + y} $x={x} $y={y} />)}
                      {dots.map(([x, y]) => <Handle key={x + y} $x={x} $y={y} $dot />)}
                    </Selection>
                    <Report>
                      <Sales>
                        <thead>
                          <tr>
                            <th scope="col">Product<br />Category</th>
                            <th scope="col">Quantity<br />Sold</th>
                          </tr>
                        </thead>
                        <tbody>
                          {sales.map(([name, sold]) => <tr key={name}><td>{name}</td><td>{sold}</td></tr>)}
                        </tbody>
                      </Sales>
                    </Report>
                    <Chart>
                      <Pie />
                      <ChartTitle>Quantity Sold</ChartTitle>
                      <Legend>
                        {slices.map((s) => <li key={s.name}><Swatch $color={s.color} />{s.name}</li>)}
                      </Legend>
                    </Chart>
                  </Page>
                </Canvas>
                <HBar>
                  <ArrowButton aria-label="Gauche"><Caret dir="left" /></ArrowButton>
                  <Track $dir="h" $lead={2}>
                    <Thumb $dir="h" $size={85}><Grip dir="h" /></Thumb>
                  </Track>
                  <ArrowButton aria-label="Droite"><Caret dir="right" /></ArrowButton>
                </HBar>
              </CanvasColumn>
              <VBar $w={17}>
                <ArrowButton aria-label="Haut"><Caret dir="up" /></ArrowButton>
                <Track $dir="v" $lead={0}>
                  <Thumb $dir="v" $size={50}><Grip dir="v" /></Thumb>
                </Track>
                <ArrowButton aria-label="Bas"><Caret /></ArrowButton>
                <BarCorner />
              </VBar>
            </BodyRow>
          </DocBody>
        </DocPanel>
      </Work>

      <TabStrip>
        <WindowButton aria-label="Fenêtres"><WindowsIcon /><Caret /></WindowButton>
        <DocTab><DocIcon />Document</DocTab>
      </TabStrip>

      <StatusBar>
        <span>Terminé</span>
        <StatusPickers>
          <StatusPick $w={111} $end={11}>
            <Sheet w={15} h={15}><Lines /></Sheet>
            <PlainSelect aria-label="Sortie" defaultValue="Rapports"><option>Rapports</option></PlainSelect>
            <Caret />
          </StatusPick>
          <StatusPick $w={136} $end={6}>
            <PdfIcon />
            <PlainSelect aria-label="Format" defaultValue="PDF"><option>PDF</option></PlainSelect>
            <Caret />
          </StatusPick>
          <StatusPick $w={131} $end={8}>
            <TabIcon />
            <PlainSelect aria-label="Onglets" defaultValue="Onglet unique"><option>Onglet unique</option></PlainSelect>
            <Caret />
          </StatusPick>
        </StatusPickers>
      </StatusBar>
    </Shell>
  );
}
